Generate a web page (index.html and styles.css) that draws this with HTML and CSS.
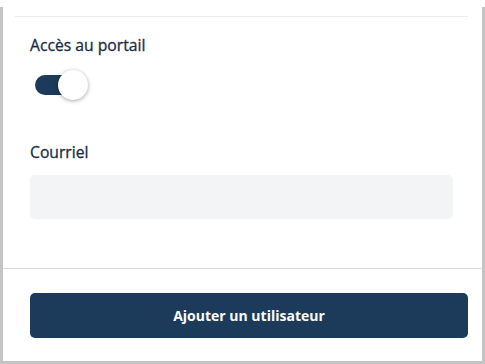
FILE: index.html
```html
<!DOCTYPE html>
<html lang="fr">
<head>
<meta charset="UTF-8">
<meta name="viewport" content="width=device-width, initial-scale=1.0">
<title>Ajouter un utilisateur</title>
<link rel="stylesheet" href="styles.css">
</head>
<body>

<div class="panel">
    <hr class="top-rule">

    <div class="panel-body">
        <div class="field">
            <label class="field-label" for="portalAccess">Accès au portail</label>
            <label class="switch">
                <input type="checkbox" id="portalAccess" checked>
                <span class="track"></span>
                <span class="knob"></span>
            </label>
        </div>

        <div class="field field-email">
            <label class="field-label" for="email">Courriel</label>
            <input type="email" id="email" class="text-input">
        </div>
    </div>

    <div class="panel-footer">
        <button type="submit" class="btn-primary">Ajouter un utilisateur</button>
    </div>
</div>

</body>
</html>
```

FILE: styles.css
```css
body {
    margin: 0;
    font-family: "Open Sans", "Noto Sans", sans-serif;
    background-color: #fff;
}

.panel {
    margin-top: 7px;
    height: 354px;
    border: 3px solid #c4c4c4;
    border-top: none;
    display: flex;
    flex-direction: column;
}

.top-rule {
    margin: 9px 14px 0 12px;
    border: none;
    border-top: 1px solid #ececec;
}

.panel-body {
    padding: 18px 27px 0 27px;
    flex: 1;
}

.field-label {
    display: block;
    font-size: 15.7px;
    line-height: 20px;
    font-weight: 400;
    color: #172c47;
    -webkit-text-stroke: 0.3px #172c47;
}

.switch {
    position: relative;
    display: block;
    width: 58px;
    height: 30px;
    margin: 15px 0 0 0;
}

.switch input {
    display: none;
}

.track {
    position: absolute;
    left: 5px;
    top: 5px;
    width: 40px;
    height: 20px;
    border-radius: 10px;
    background-color: #1c3a5a;
}

.knob {
    position: absolute;
    left: 28px;
    top: 0;
    width: 30px;
    height: 30px;
    border-radius: 50%;
    background-color: #fff;
    box-shadow: 0 1px 4px rgba(0, 0, 0, 0.35);
}

.field-email {
    margin-top: 42px;
}

.text-input {
    display: block;
    box-sizing: border-box;
    width: 423px;
    height: 44px;
    margin-top: 13px;
    border: none;
    border-radius: 5px;
    background-color: #f3f4f6;
}

.panel-footer {
    border-top: 1px solid #dcdcdc;
    padding: 24px 14px 23px 27px;
}

.btn-primary {
    display: block;
    width: 100%;
    height: 45px;
    border: none;
    border-radius: 5px;
    background-color: #1c3a5a;
    color: #fff;
    font-family: "Open Sans", "Noto Sans", sans-serif;
    font-size: 14px;
    font-weight: 700;
    cursor: pointer;
}
```
